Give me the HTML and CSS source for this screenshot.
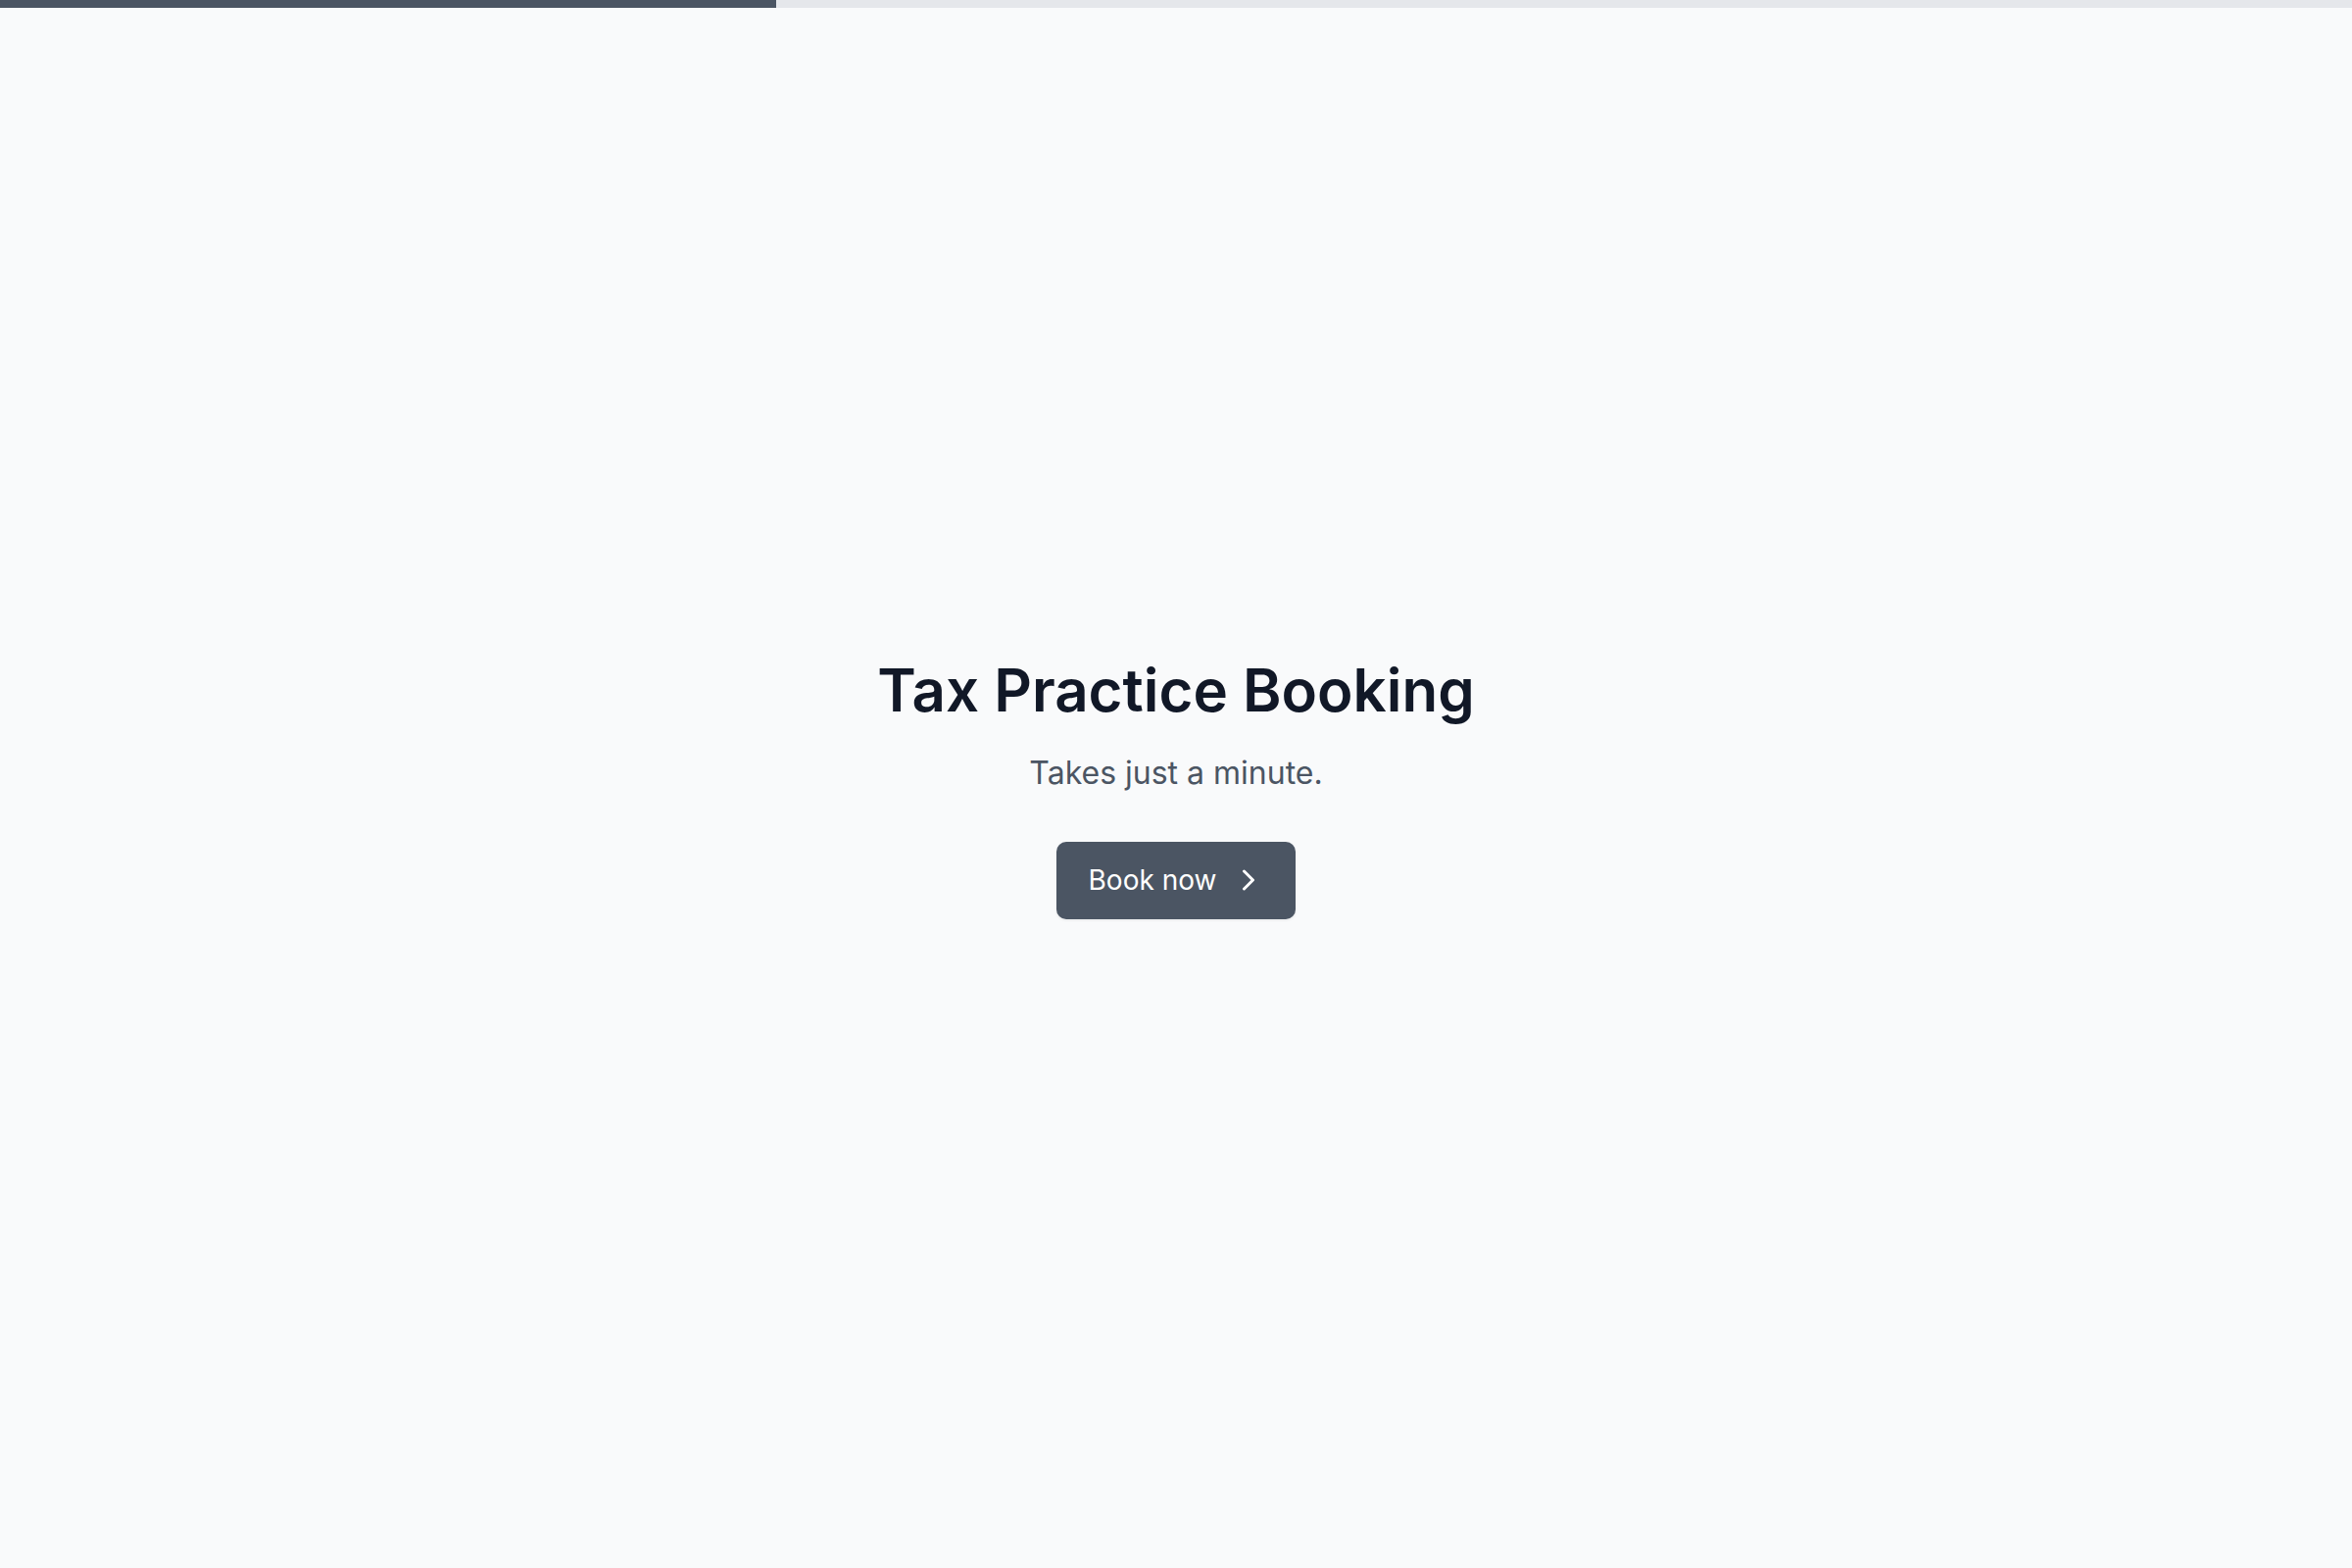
FILE: index.html
```html
<!DOCTYPE html>
<html>
<head>
    <meta charset="UTF-8">
    <title>Tax Practice Booking</title>
    <link rel="stylesheet" href="styles.css">
</head>
<body>
    <div class="progress">
        <div class="progress-fill"></div>
    </div>

    <main class="intro">
        <h1 class="title">Tax Practice Booking</h1>
        <p class="subtitle">Takes just a minute.</p>
        <button class="button" type="button">
            <span>Book now</span>
            <svg class="chevron" viewBox="0 0 24 24" fill="none" stroke="currentColor" stroke-width="2" stroke-linecap="round" stroke-linejoin="round">
                <path d="m9 18 6-6-6-6"/>
            </svg>
        </button>
    </main>
</body>
</html>
```

FILE: styles.css
```css
html, body {
    height: 100%;
}
body {
    margin: 0;
    display: flex;
    flex-direction: column;
    background-color: #f9fafb;
    color: #111827;
    font-family: Inter, "Noto Sans", sans-serif;
}
.progress {
    height: 8px;
    background-color: #e5e7eb;
    flex-shrink: 0;
}
.progress-fill {
    width: 33%;
    height: 100%;
    background-color: #4b5563;
}
.intro {
    flex: 1;
    display: flex;
    flex-direction: column;
    align-items: center;
    justify-content: center;
    text-align: center;
}
.title {
    margin: 0;
    font-size: 60px;
    line-height: 66px;
    font-weight: 600;
}
.subtitle {
    margin: 30px 0 0;
    font-size: 32px;
    line-height: 44px;
    color: #4b5563;
}
.button {
    margin-top: 48px;
    display: flex;
    align-items: center;
    gap: 15px;
    height: 79px;
    padding: 0 30px 0 33px;
    background-color: #4b5563;
    color: #fff;
    border: none;
    border-radius: 10px;
    box-shadow: 0 1px 3px rgba(0, 0, 0, 0.08);
    font-family: inherit;
    font-size: 28px;
    cursor: pointer;
}
.chevron {
    width: 36px;
    height: 36px;
}
```
